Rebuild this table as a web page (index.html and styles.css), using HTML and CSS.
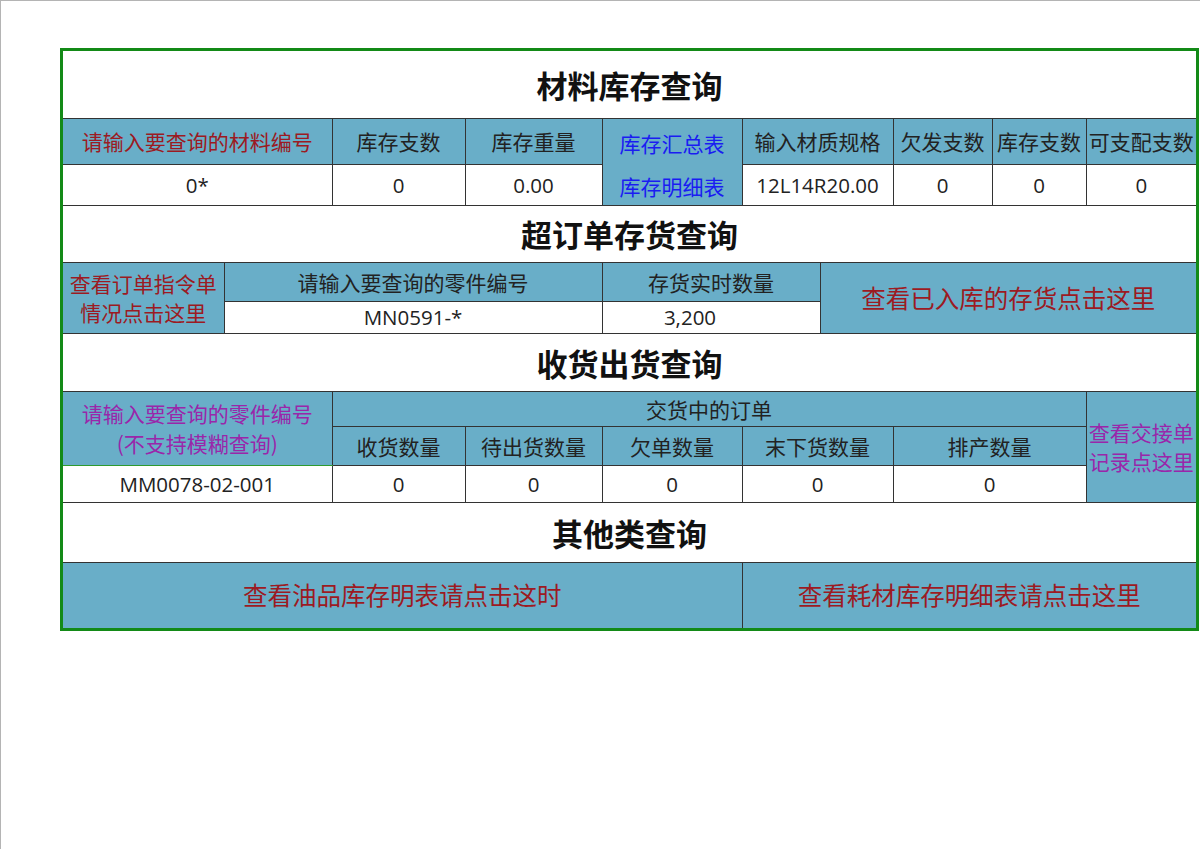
FILE: index.html
```html
<!DOCTYPE html>
<html lang="zh-CN">
<head>
<meta charset="utf-8">
<title>材料库存查询</title>
<link rel="stylesheet" href="styles.css">
</head>
<body>
<div class="frame">
  <table class="sheet">
    <colgroup>
      <col class="c1"><col class="c2"><col class="c3"><col class="c4"><col class="c5">
      <col class="c6"><col class="c7"><col class="c8"><col class="c9"><col class="c10">
    </colgroup>
    <tbody>
      <tr class="r-title1"><td class="title" colspan="10">材料库存查询</td></tr>
      <tr class="r-h1">
        <td class="hd red" colspan="2">请输入要查询的材料编号</td>
        <td class="hd">库存支数</td>
        <td class="hd">库存重量</td>
        <td class="hd blue links" rowspan="2"><div class="link-line top">库存汇总表</div><div class="link-line">库存明细表</div></td>
        <td class="hd" colspan="2">输入材质规格</td>
        <td class="hd">欠发支数</td>
        <td class="hd">库存支数</td>
        <td class="hd">可支配支数</td>
      </tr>
      <tr class="r-d1">
        <td class="dt" colspan="2">0*</td>
        <td class="dt">0</td>
        <td class="dt">0.00</td>
        <td class="dt" colspan="2">12L14R20.00</td>
        <td class="dt">0</td>
        <td class="dt">0</td>
        <td class="dt">0</td>
      </tr>

      <tr class="r-title2"><td class="title" colspan="10">超订单存货查询</td></tr>
      <tr class="r-h2">
        <td class="hd red wrap" rowspan="2">查看订单指令单情况点击这里</td>
        <td class="hd" colspan="3">请输入要查询的零件编号</td>
        <td class="hd" colspan="2">存货实时数量</td>
        <td class="hd red big" colspan="4" rowspan="2">查看已入库的存货点击这里</td>
      </tr>
      <tr class="r-d2">
        <td class="dt" colspan="3">MN0591-*</td>
        <td class="dt num" colspan="2">3,200</td>
      </tr>

      <tr class="r-title3"><td class="title" colspan="10">收货出货查询</td></tr>
      <tr class="r-h3">
        <td class="hd purple greenline" colspan="2" rowspan="2">请输入要查询的零件编号<br>(不支持模糊查询)</td>
        <td class="hd" colspan="7">交货中的订单</td>
        <td class="hd purple wrap" rowspan="3">查看交接单记录点这里</td>
      </tr>
      <tr class="r-h3b">
        <td class="hd">收货数量</td>
        <td class="hd">待出货数量</td>
        <td class="hd">欠单数量</td>
        <td class="hd" colspan="2">末下货数量</td>
        <td class="hd" colspan="2">排产数量</td>
      </tr>
      <tr class="r-d3">
        <td class="dt greenline-top" colspan="2">MM0078-02-001</td>
        <td class="dt">0</td>
        <td class="dt">0</td>
        <td class="dt">0</td>
        <td class="dt" colspan="2">0</td>
        <td class="dt" colspan="2">0</td>
      </tr>

      <tr class="r-title4"><td class="title" colspan="10">其他类查询</td></tr>
      <tr class="r-last">
        <td class="hd red big" colspan="5">查看油品库存明表请点击这时</td>
        <td class="hd red big" colspan="5">查看耗材库存明细表请点击这里</td>
      </tr>
    </tbody>
  </table>
</div>
</body>
</html>
```

FILE: styles.css
```css
html, body {
  margin: 0;
  padding: 0;
  background: #ffffff;
}

body {
  width: 1199px;
  height: 848px;
  border-top: 1px solid #b4b4b4;
  border-left: 1px solid #b4b4b4;
  font-family: "Open Sans", "Noto Sans CJK SC", sans-serif;
  color: #222222;
}

.frame {
  margin: 47px 0 0 59px;
  width: 1133px;
  border: 3px solid #138a17;
}

.sheet {
  width: 1133px;
  table-layout: fixed;
  border-collapse: collapse;
  border-style: hidden;
}

.c1 { width: 161px; }
.c2 { width: 108px; }
.c3 { width: 133px; }
.c4 { width: 137px; }
.c5 { width: 140px; }
.c6 { width: 78px; }
.c7 { width: 73px; }
.c8 { width: 99px; }
.c9 { width: 94px; }
.c10 { width: 110px; }

.sheet td {
  border: 1px solid #333333;
  padding: 0;
  text-align: center;
  vertical-align: middle;
  white-space: nowrap;
  overflow: hidden;
}

.title {
  background: #ffffff;
  font-family: "Noto Sans CJK SC", sans-serif;
  font-weight: 700;
  font-size: 31px;
  color: #111111;
}

.hd {
  background: #69aec8;
  font-family: "Noto Sans CJK SC", sans-serif;
  font-size: 21px;
  line-height: 28px;
  color: #222222;
}

.dt {
  background: #ffffff;
  font-size: 20.5px;
  color: #222222;
}

.red { color: #9c1a22; }
.blue { color: #1a1cf2; }
.purple { color: #9a26aa; }

.big { font-size: 24.5px; }

.sheet td.wrap {
  white-space: normal;
  padding: 0 2px;
  line-height: 29px;
}

.links {
  vertical-align: top;
}

.link-line {
  height: 42px;
  line-height: 46px;
}

.link-line.top {
  height: 44px;
  line-height: 48px;
}

.num {
  padding-right: 42px !important;
}

.sheet td.greenline {
  border-top: 1px solid #2f9a2f;
  border-bottom: 1px solid #2f9a2f;
  line-height: 30px;
}

.sheet td.greenline-top {
  border-top: 1px solid #2f9a2f;
}

.r-title1 { height: 67px; }
.r-h1 { height: 46px; }
.r-d1 { height: 41px; }
.r-title2 { height: 57px; }
.r-h2 { height: 39px; }
.r-d2 { height: 32px; }
.r-title3 { height: 58px; }
.r-h3 { height: 35px; }
.r-h3b { height: 39px; }
.r-d3 { height: 37px; }
.r-title4 { height: 60px; }
.r-last { height: 66px; }
```
